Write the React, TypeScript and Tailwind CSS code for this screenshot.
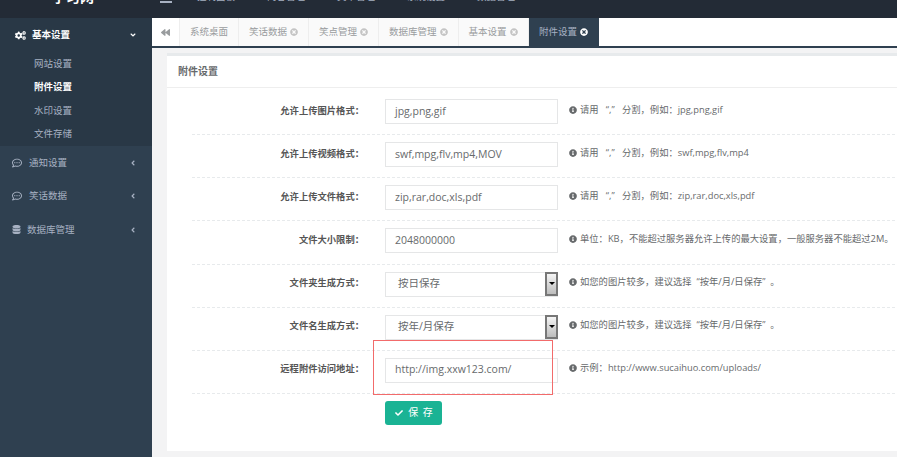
import React from 'react';
import { FaAngleDown, FaAngleLeft, FaBackward, FaCheck, FaCogs, FaDatabase, FaInfoCircle, FaRegCommentDots, FaTimesCircle } from 'react-icons/fa';

const font = { fontFamily: '"Open Sans", "Noto Sans CJK SC", sans-serif' };

const tabs = [
    { label: '系统桌面', closable: false },
    { label: '笑话数据', closable: true },
    { label: '笑点管理', closable: true },
    { label: '数据库管理', closable: true },
    { label: '基本设置', closable: true },
];

const rows = [
    { label: '允许上传图片格式：', value: 'jpg,png,gif', tip: '请用   “,”   分割，例如：jpg,png,gif' },
    { label: '允许上传视频格式：', value: 'swf,mpg,flv,mp4,MOV', tip: '请用   “,”   分割，例如：swf,mpg,flv,mp4' },
    { label: '允许上传文件格式：', value: 'zip,rar,doc,xls,pdf', tip: '请用   “,”   分割，例如：zip,rar,doc,xls,pdf' },
    { label: '文件大小限制：', value: '2048000000', tip: '单位：KB，不能超过服务器允许上传的最大设置，一般服务器不能超过2M。' },
    { label: '文件夹生成方式：', value: '按日保存', tip: '如您的图片较多，建议选择  “按年/月/日保存”  。', select: true },
    { label: '文件名生成方式：', value: '按年/月保存', tip: '如您的图片较多，建议选择  “按年/月/日保存”  。', select: true },
    { label: '远程附件访问地址：', value: 'http://img.xxw123.com/', tip: '示例：http://www.sucaihuo.com/uploads/', marked: true },
];

const NavGroup = ({ icon, label, iconWidth }: { icon: React.ReactNode; label: string; iconWidth: string }) => (
    <div className="flex h-[33.5px] items-center pl-3 pr-[15px] text-[9.5px] text-[#a7b1c2]">
        <span className={iconWidth}>{icon}</span>
        <span className="flex-1">{label}</span>
        <FaAngleLeft size={8} />
    </div>
);

export default function App() {
    return (
        <div className="flex h-[457px] w-[897px] flex-col overflow-hidden bg-[#f3f3f4]" style={font}>
            {/* Top bar, cut off by the screenshot */}
            <div className="flex h-[18px] shrink-0 items-end overflow-hidden bg-[#232b36] text-[#a7b1c2]">
                <div className="mb-[14px] w-[160px] shrink-0 pl-[52px] text-[14px] font-bold leading-none text-white">学习网</div>
                <div className="mb-[15px] h-[2px] w-[12px] shrink-0 bg-[#a7b1c2]" />
                <div className="mb-[16.5px] ml-[25px] flex shrink-0 gap-[32px] text-[9.5px] leading-none">
                    <span>控制面板</span>
                    <span>内容管理</span>
                    <span>文章管理</span>
                    <span>系统设置</span>
                    <span>数据管理</span>
                </div>
            </div>

            <div className="flex min-h-0 flex-1">
                {/* Sidebar */}
                <aside className="w-[152px] shrink-0 bg-[#2f4050]">
                    <div className="h-[128px] bg-[#293846]">
                        <div className="flex h-[34px] items-center pl-[15px] pr-[15px] text-[9.5px] font-bold text-white">
                            <FaCogs size={11} />
                            <span className="ml-[6px] flex-1">基本设置</span>
                            <FaAngleDown size={8} />
                        </div>
                        <div className="-mt-[0.5px] flex flex-col pl-[34px] text-[9.5px] leading-[23.5px] text-[#a7b1c2]">
                            <span>网站设置</span>
                            <span className="font-bold text-white">附件设置</span>
                            <span>水印设置</span>
                            <span>文件存储</span>
                        </div>
                    </div>
                    <NavGroup icon={<FaRegCommentDots size={10} />} label="通知设置" iconWidth="w-[17px]" />
                    <NavGroup icon={<FaRegCommentDots size={10} />} label="笑话数据" iconWidth="w-[17px]" />
                    <NavGroup icon={<FaDatabase size={9} />} label="数据库管理" iconWidth="w-[15px]" />
                </aside>

                <main className="flex min-w-0 flex-1 flex-col">
                    {/* Tab strip */}
                    <div className="flex h-[30px] shrink-0 border-b-2 border-[#2f4050] bg-white text-[9.5px] text-[#999c9e]">
                        <div className="flex w-[28px] items-center justify-center border-r border-[#eeeeee] text-[#999c9e]">
                            <FaBackward size={9} />
                        </div>
                        {tabs.map(tab => (
                            <div key={tab.label} className="flex items-center gap-[3px] border-r border-[#eeeeee] bg-[#fafafa] px-[10px]">
                                {tab.label}
                                {tab.closable && <FaTimesCircle size={8} className="text-[#c4c4c4]" />}
                            </div>
                        ))}
                        <div className="flex items-center gap-[3px] bg-[#2f4050] px-[10.5px] text-[#a7b1c2]">
                            附件设置
                            <FaTimesCircle size={8} className="text-white" />
                        </div>
                    </div>

                    {/* Settings card */}
                    <div className="ml-[15px] mt-[5px] flex h-[398px] flex-col border-t-[3px] border-[#e7eaec] bg-white">
                        <div className="flex h-[32px] shrink-0 items-center border-b border-[#eeeeee] pl-[11px] text-[10px] font-bold text-[#676a6c]">
                            附件设置
                        </div>
                        <div className="ml-[25px] mr-[2px] pt-[4px]">
                            {rows.map(row => (
                                <div key={row.label} className="flex h-[43.15px] items-start border-b border-dashed border-[#e7eaec] pt-[7px]">
                                    <label className="-mt-[1px] flex h-[25px] w-[172px] shrink-0 items-center justify-end text-[9.3px] font-bold text-[#555555]">{row.label}</label>
                                    <div className="relative ml-[21px] w-[173px] shrink-0">
                                        <div className={`flex h-[25px] items-center border border-[#e5e6e7] bg-white text-[10.5px] text-[#676a6c] ${row.select ? 'pl-[12px]' : 'pl-[9px]'}`}>
                                            {row.value}
                                        </div>
                                        {row.select && (
                                            <div className="absolute right-0 top-0 flex h-[24px] w-[13px] items-center justify-center border-2 border-[#777777] bg-gradient-to-b from-[#f5f5f5] to-[#bdbdbd]">
                                                <div className="h-0 w-0 border-x-[3px] border-t-[3px] border-x-transparent border-t-black" />
                                            </div>
                                        )}
                                        {row.marked && <div className="absolute left-[-12px] top-[-18px] h-[55px] w-[180px] border border-[#f26b6b]" />}
                                    </div>
                                    <div className="-mt-[2px] ml-[11px] flex h-[25px] items-center gap-[3px] whitespace-pre text-[9.3px] text-[#676a6c]">
                                        <FaInfoCircle size={8} />
                                        {row.tip}
                                    </div>
                                </div>
                            ))}
                            <div className="ml-[193px] mt-[7px]">
                                <button className="flex h-[24px] w-[57px] items-center justify-center gap-[5px] rounded-[3px] bg-[#1ab394] pl-[2px] text-[10px] tracking-[1px] text-white">
                                    <FaCheck size={8} />
                                    保 存
                                </button>
                            </div>
                        </div>
                    </div>
                </main>
            </div>
        </div>
    );
}
